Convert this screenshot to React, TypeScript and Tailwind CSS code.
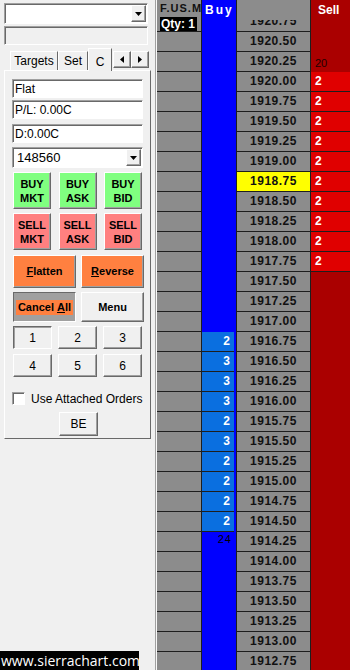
import React from 'react';

const sans = "font-['Liberation_Sans',Arial,sans-serif]";
const raised =
  'border border-t-white border-l-white border-r-[#696969] border-b-[#696969] shadow-[inset_-1px_-1px_0_#a0a0a0]';
const sunken =
  'border border-t-[#a0a0a0] border-l-[#a0a0a0] border-r-white border-b-white shadow-[inset_1px_1px_0_#696969]';
const pressed =
  'border border-t-[#696969] border-l-[#696969] border-r-white border-b-white shadow-[inset_1px_1px_0_#a0a0a0]';

const asks: Record<string, string> = {
  '1920.25': '20',
  '1920.00': '2',
  '1919.75': '2',
  '1919.50': '2',
  '1919.25': '2',
  '1919.00': '2',
  '1918.75': '2',
  '1918.50': '2',
  '1918.25': '2',
  '1918.00': '2',
  '1917.75': '2',
};

const bids: Record<string, string> = {
  '1916.75': '2',
  '1916.50': '3',
  '1916.25': '3',
  '1916.00': '3',
  '1915.75': '2',
  '1915.50': '3',
  '1915.25': '2',
  '1915.00': '2',
  '1914.75': '2',
  '1914.50': '2',
};

const prices = Array.from({ length: 33 }, (_, i) => (1920.75 - i * 0.25).toFixed(2));

function Arrow({ dir }: { dir: 'down' | 'left' | 'right' }) {
  if (dir === 'down')
    return (
      <svg width="7" height="4" viewBox="0 0 7 4">
        <path d="M0 0h7L3.5 4z" fill="#000" />
      </svg>
    );
  return (
    <svg width="4" height="7" viewBox="0 0 4 7">
      <path d={dir === 'left' ? 'M4 0v7L0 3.5z' : 'M0 0v7l4-3.5z'} fill="#000" />
    </svg>
  );
}

function Combo({ value, className }: { value: string; className: string }) {
  return (
    <div className={`${sunken} bg-white flex items-center ${className}`}>
      <span className="flex-1 pl-[4px] text-[13px] leading-none text-[#000]">{value}</span>
      <div className={`${raised} bg-[#f0f0f0] w-[15px] h-[17px] mr-[1px] flex items-center justify-center`}>
        <Arrow dir="down" />
      </div>
    </div>
  );
}

function Field({ text, className }: { text: string; className: string }) {
  return (
    <div className={`${sunken} bg-white h-[19px] flex items-center pl-[2px] text-[12px] ${className}`}>{text}</div>
  );
}

function OrderBtn({ top, bottom, color }: { top: string; bottom: string; color: string }) {
  return (
    <div
      className={`${raised} ${color} w-[38px] h-[37px] flex flex-col items-center justify-center text-[11px] font-bold leading-[14px]`}
    >
      <span>{top}</span>
      <span>{bottom}</span>
    </div>
  );
}

function LeftPanel() {
  return (
    <div className={`w-[155px] h-full bg-[#f0f0f0] flex flex-col ${sans} text-black`}>
      <Combo value="" className="mt-[3px] ml-[4px] w-[144px] h-[21px]" />
      <div className={`${sunken} mt-[2px] ml-[4px] w-[144px] h-[19px]`} />

      <div className="mt-[3px] h-[22px] flex items-end pl-[10px] relative z-10">
        <div className={`${raised} border-b-0 shadow-none h-[19px] w-[48px] flex items-center justify-center text-[12px]`}>
          Targets
        </div>
        <div className={`${raised} border-b-0 shadow-none h-[19px] w-[30px] flex items-center justify-center text-[12px]`}>
          Set
        </div>
        <div className="border border-b-0 border-t-white border-l-white border-r-[#696969] h-[23px] -mb-[1px] w-[24px] bg-[#f0f0f0] flex items-start justify-center pt-[4px] text-[12px]">
          C
        </div>
        <div className="self-center ml-[1px] flex">
          <div className={`${raised} bg-[#f0f0f0] w-[18px] h-[17px] flex items-center justify-center`}>
            <Arrow dir="left" />
          </div>
          <div className={`${raised} bg-[#f0f0f0] w-[18px] h-[17px] flex items-center justify-center`}>
            <Arrow dir="right" />
          </div>
        </div>
      </div>

      <div className="ml-[4px] w-[147px] h-[369px] border border-t-white border-l-white border-r-[#696969] border-b-[#696969] flex flex-col">
        <Field text="Flat" className="mt-[8px] mx-[7px]" />
        <Field text="P/L: 0.00C" className="mt-[2px] mx-[7px]" />
        <Field text="D:0.00C" className="mt-[5px] mx-[7px]" />
        <Combo value="148560" className="mt-[4px] mx-[7px] h-[21px]" />

        <div className="mt-[4px] px-[8px] flex justify-between">
          <OrderBtn top="BUY" bottom="MKT" color="bg-[#80ff80]" />
          <OrderBtn top="BUY" bottom="ASK" color="bg-[#80ff80]" />
          <OrderBtn top="BUY" bottom="BID" color="bg-[#80ff80]" />
        </div>
        <div className="mt-[4px] px-[8px] flex justify-between">
          <OrderBtn top="SELL" bottom="MKT" color="bg-[#ff8080]" />
          <OrderBtn top="SELL" bottom="ASK" color="bg-[#ff8080]" />
          <OrderBtn top="SELL" bottom="BID" color="bg-[#ff8080]" />
        </div>

        <div className="mt-[5px] pl-[8px] flex gap-[5px]">
          <div className={`${raised} bg-[#ff8040] w-[63px] h-[33px] flex items-center justify-center text-[11px] font-bold`}>
            <span>
              <span className="underline">F</span>latten
            </span>
          </div>
          <div className={`${raised} bg-[#ff8040] w-[63px] h-[33px] flex items-center justify-center text-[11px] font-bold`}>
            <span>
              <span className="underline">R</span>everse
            </span>
          </div>
        </div>

        <div className="mt-[4px] pl-[8px] flex gap-[5px]">
          <div className={`${pressed} bg-[#a0a0a0] w-[63px] h-[30px] flex items-center justify-center`}>
            <span className="bg-[#ff8040] px-[2px] h-[15px] flex items-center text-[11px] font-bold">
              Cancel&nbsp;<span className="underline">A</span>ll
            </span>
          </div>
          <div className={`${raised} bg-[#f0f0f0] w-[63px] h-[30px] flex items-center justify-center text-[11px] font-bold`}>
            Menu
          </div>
        </div>

        <div className="mt-[4px] px-[8px] flex justify-between">
          {['1', '2', '3'].map((n) => (
            <div
              key={n}
              className={`${n === '1' ? pressed : raised} bg-[#f0f0f0] w-[39px] h-[23px] flex items-center justify-center text-[12px]`}
            >
              {n}
            </div>
          ))}
        </div>
        <div className="mt-[5px] px-[8px] flex justify-between">
          {['4', '5', '6'].map((n) => (
            <div key={n} className={`${raised} bg-[#f0f0f0] w-[39px] h-[23px] flex items-center justify-center text-[12px]`}>
              {n}
            </div>
          ))}
        </div>

        <div className="mt-[15px] pl-[7px] flex items-center gap-[6px]">
          <div className={`${sunken} bg-white w-[13px] h-[13px]`} />
          <span className="text-[12px] leading-none">Use Attached Orders</span>
        </div>

        <div className={`${raised} bg-[#f0f0f0] mt-[7px] ml-[54px] w-[39px] h-[24px] flex items-center justify-center text-[12px]`}>
          BE
        </div>
      </div>

      <div className="mt-auto w-[139px] h-[19px] bg-black text-white text-[14px] leading-[19px] pl-[1px] font-['Open_Sans',sans-serif]">
        www.sierrachart.com
      </div>
    </div>
  );
}

function Ladder() {
  return (
    <div className={`flex-1 h-full relative overflow-hidden bg-[#8c8c8c] ${sans}`}>
      <div className="pt-[12px]">
        {prices.map((p) => {
          const bid = bids[p];
          const ask = asks[p];
          const askBright = ask === '2';
          return (
            <div key={p} className="flex h-[20px]">
              <div className="w-[45px] border-r border-b border-[#1e1e1e] bg-[#8c8c8c]" />
              <div className="w-[35px] border-r border-[#1e1e1e] bg-[#0000ff] relative">
                {bid && (
                  <div className="h-full mr-[2px] bg-[#0a6fe0] border-b border-[#1e1e1e] text-right pr-[4px] text-white text-[12px] font-bold leading-[19px]">
                    {bid}
                  </div>
                )}
                {p === '1914.25' && (
                  <div className="text-right pr-[4px] text-black text-[11px] tracking-[1px] leading-[12px] pt-[1px]">24</div>
                )}
              </div>
              <div
                className={`w-[74px] border-r border-b border-[#1e1e1e] text-center text-[12px] font-bold tracking-[0.5px] leading-[19px] text-[#111] ${
                  p === '1918.75' ? 'bg-[#ffff00]' : 'bg-[#8c8c8c]'
                }`}
              >
                {p}
              </div>
              <div
                className={`flex-1 ${askBright ? 'bg-[#e00000] border-b border-[#1e1e1e] text-white font-bold' : 'bg-[#aa0000] text-black'} pl-[4px] text-[12px] leading-[19px]`}
              >
                {ask === '20' ? <span className="text-[11px] leading-[22px] text-[#220000]">20</span> : ask}
              </div>
            </div>
          );
        })}
      </div>

      <div className="absolute top-0 left-0 right-0 h-[20px] flex">
        <div className="w-[45px] border-r border-[#1e1e1e] bg-[#8c8c8c] overflow-hidden whitespace-nowrap pl-[3px] pt-[2px] text-[11px] font-bold tracking-[1px] text-[#111] leading-[12px]">
          F.US.MES
        </div>
        <div className="w-[35px] border-r border-[#1e1e1e] bg-[#0000ff] text-white text-[12px] font-bold tracking-[2px] pl-[3px] pt-[3px] leading-[14px]">
          Buy
        </div>
        <div className="w-[74px] border-r border-[#1e1e1e] bg-[#8c8c8c]" />
        <div className="flex-1 bg-[#aa0000] text-white text-[12px] font-bold pl-[7px] pt-[3px] leading-[14px]">Sell</div>
      </div>
      <div className="absolute top-[17px] left-[3px] w-[37px] h-[14px] bg-black text-white text-[12px] font-bold leading-[14px] pl-[1px]">
        Qty: 1
      </div>
    </div>
  );
}

export default function App() {
  return (
    <div className="w-[350px] h-[670px] flex overflow-hidden bg-[#f0f0f0]">
      <LeftPanel />
      <div className="w-[2px] h-full flex">
        <div className="w-[1px] bg-[#a0a0a0]" />
        <div className="w-[1px] bg-[#f8f8f8]" />
      </div>
      <Ladder />
    </div>
  );
}
